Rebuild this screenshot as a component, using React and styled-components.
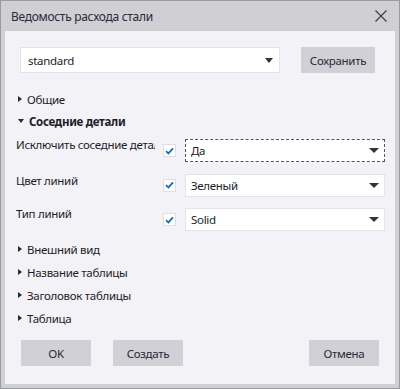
import React from "react";
import styled, { createGlobalStyle } from "styled-components";

const GlobalStyle = createGlobalStyle`
  html, body {
    margin: 0;
    padding: 0;
    background: #cfcfd4;
  }
  body {
    font-family: "Noto Sans", "Open Sans", sans-serif;
    font-size: 11.5px;
    letter-spacing: -0.3px;
    color: #1c1c28;
  }
`;

const Window = styled.div`
  box-sizing: border-box;
  width: 400px;
  height: 389px;
  border: 1px solid #9a9aa1;
  background: #cfcfd4;
  display: flex;
  flex-direction: column;
  padding: 0 4px 4px 4px;
`;

const TitleBar = styled.div`
  height: 30px;
  display: flex;
  align-items: center;
  justify-content: space-between;
  padding: 0 4px 0 6px;
  flex-shrink: 0;
`;

const Title = styled.span`
  font-size: 12px;
  color: #2a2a36;
`;

const CloseButton = styled.button`
  width: 20px;
  height: 20px;
  border: 0;
  padding: 0;
  background: transparent;
  display: flex;
  align-items: center;
  justify-content: center;
`;

const Content = styled.div`
  flex: 1;
  background: #f2f2f7;
  padding: 16px 0 18px 0;
  display: flex;
  flex-direction: column;
`;

const TopRow = styled.div`
  display: flex;
  align-items: center;
  justify-content: space-between;
  padding: 0 20px 0 15px;
  margin-bottom: 15px;
`;

const Combo = styled.div`
  box-sizing: border-box;
  width: ${(p) => p.$width}px;
  height: ${(p) => p.$height}px;
  background: #ffffff;
  border: 1px ${(p) => (p.$focused ? "dashed #55555c" : "solid #e3e3e8")};
  display: flex;
  align-items: center;
  justify-content: space-between;
  padding: 0 ${(p) => p.$padRight}px 0 ${(p) => p.$padLeft}px;
  color: #1c1c28;
`;

const Arrow = styled.span`
  width: 0;
  height: 0;
  border-left: ${(p) => p.$size}px solid transparent;
  border-right: ${(p) => p.$size}px solid transparent;
  border-top: 5px solid #33333f;
`;

const Button = styled.button`
  box-sizing: border-box;
  width: ${(p) => p.$width}px;
  height: 26px;
  border: 0;
  background: #d0d0d6;
  font-family: inherit;
  font-size: 11.5px;
  letter-spacing: -0.3px;
  color: #2a2a36;
  padding: 0;
`;

const Section = styled.div`
  height: ${(p) => p.$height}px;
  display: flex;
  align-items: center;
  padding-left: 13px;
  font-weight: ${(p) => (p.$open ? 700 : 400)};
  color: #1c1c28;
`;

const RightTri = styled.span`
  width: 0;
  height: 0;
  border-top: 3px solid transparent;
  border-bottom: 3px solid transparent;
  border-left: 4px solid #2a2a36;
  margin-right: 5px;
`;

const DownTri = styled.span`
  width: 0;
  height: 0;
  border-left: 3.5px solid transparent;
  border-right: 3.5px solid transparent;
  border-top: 4px solid #2a2a36;
  margin-right: 5px;
`;

const Props = styled.div`
  display: flex;
  flex-direction: column;
  padding-top: 7px;
`;

const PropRow = styled.div`
  height: ${(p) => p.$height}px;
  display: flex;
  align-items: flex-start;
  padding-left: 11px;
`;

const Label = styled.div`
  width: 139px;
  white-space: nowrap;
  overflow: hidden;
  line-height: 16px;
  margin-top: ${(p) => p.$offset}px;
  margin-right: 8px;
`;

const Check = styled.div`
  box-sizing: border-box;
  width: 13px;
  height: 13px;
  margin-top: 5px;
  margin-right: 9px;
  background: #ffffff;
  border: 1px solid #dedee3;
  display: flex;
  align-items: center;
  justify-content: center;
`;

const Footer = styled.div`
  display: flex;
  align-items: center;
  padding: 0 16px;
  margin-top: auto;
  gap: 22px;
`;

const Spacer = styled.div`
  flex: 1;
`;

const CheckMark = () => (
  <svg width="9" height="8" viewBox="0 0 9 8">
    <path d="M1 4.2 L3.4 6.4 L8 1.4" fill="none" stroke="#1b6cb4" strokeWidth="1.8" />
  </svg>
);

const sections = ["Внешний вид", "Название таблицы", "Заголовок таблицы", "Таблица"];

const rows = [
  { label: "Исключить соседние детали", value: "Да", focused: true, offset: -2, height: 34.5 },
  { label: "Цвет линий", value: "Зеленый", offset: -1, height: 34.5 },
  { label: "Тип линий", value: "Solid", offset: -2, height: 29.5 },
];

const App = () => {
  return (
    <>
      <GlobalStyle />
      <Window>
        <TitleBar>
          <Title>Ведомость расхода стали</Title>
          <CloseButton aria-label="close">
            <svg width="12" height="12" viewBox="0 0 12 12">
              <path d="M0.5 0.5 L11.5 11.5 M11.5 0.5 L0.5 11.5" stroke="#3a3a44" strokeWidth="1.1" />
            </svg>
          </CloseButton>
        </TitleBar>
        <Content>
          <TopRow>
            <Combo $width={260} $height={26} $padLeft={7} $padRight={6}>
              <span>standard</span>
              <Arrow $size={4.5} />
            </Combo>
            <Button $width={74}>Сохранить</Button>
          </TopRow>
          <Section $height={22}>
            <RightTri />
            Общие
          </Section>
          <Section $height={22} $open>
            <DownTri />
            Соседние детали
          </Section>
          <Props>
            {rows.map((r) => (
              <PropRow key={r.label} $height={r.height}>
                <Label $offset={r.offset}>{r.label}</Label>
                <Check>
                  <CheckMark />
                </Check>
                <Combo $width={200} $height={23} $padLeft={5} $padRight={5} $focused={r.focused}>
                  <span>{r.value}</span>
                  <Arrow $size={5.5} />
                </Combo>
              </PropRow>
            ))}
          </Props>
          {sections.map((s) => (
            <Section key={s} $height={23}>
              <RightTri />
              {s}
            </Section>
          ))}
          <Footer>
            <Button $width={70}>OK</Button>
            <Button $width={70}>Создать</Button>
            <Spacer />
            <Button $width={70}>Отмена</Button>
          </Footer>
        </Content>
      </Window>
    </>
  );
};

export default App;
